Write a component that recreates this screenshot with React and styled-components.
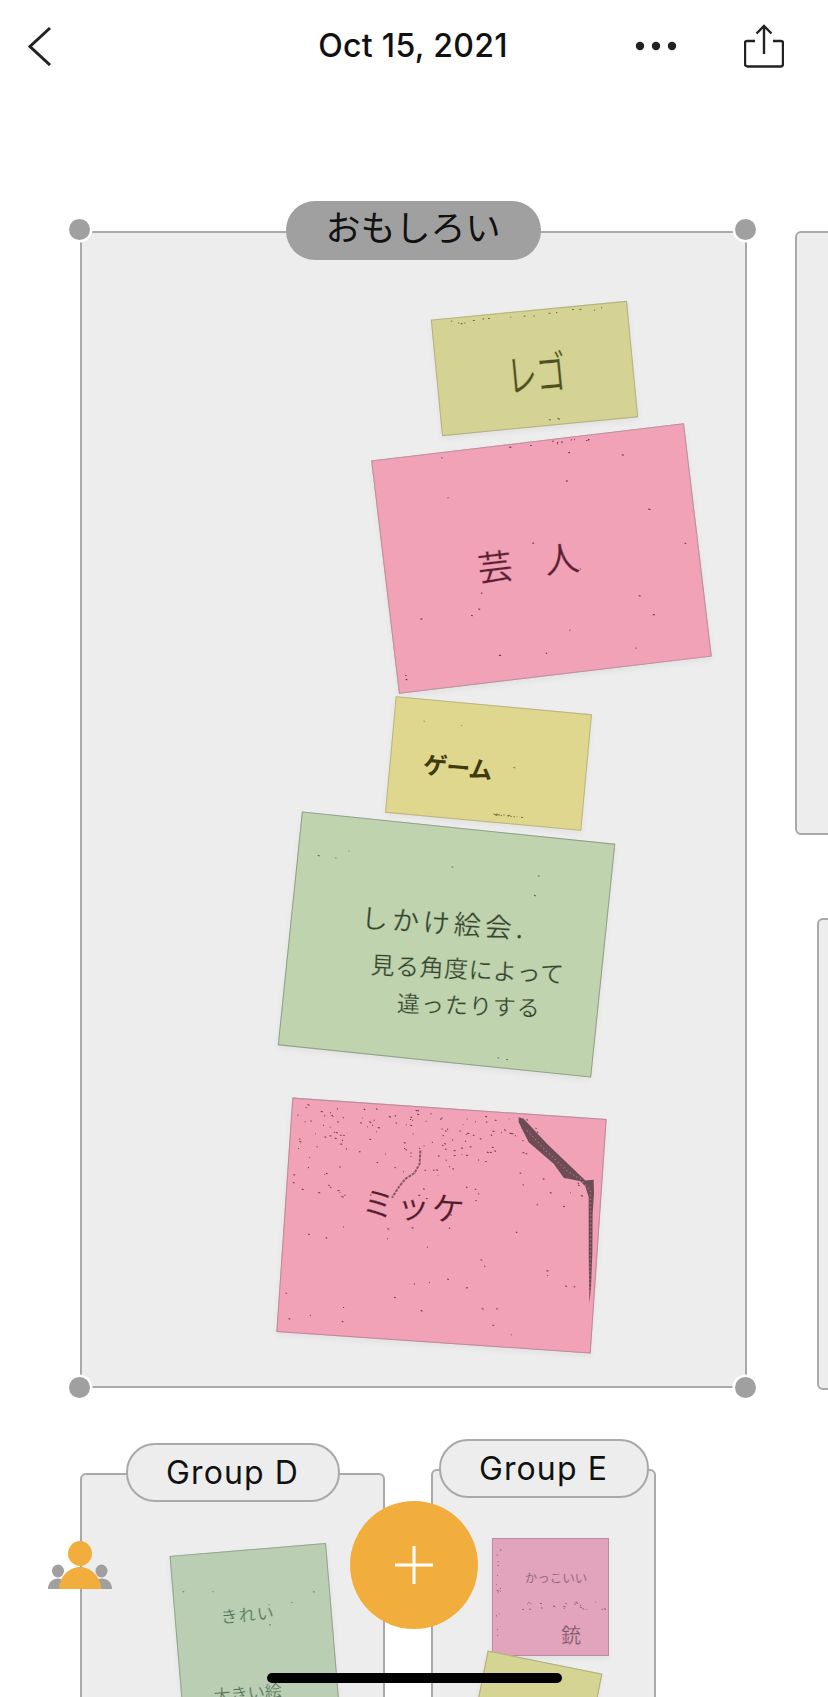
import React from "react";
import styled, { createGlobalStyle } from "styled-components";

const HEADER = 92;
const UI_FONT = '"Inter", "Liberation Sans", sans-serif';
const CJK_FONT = '"Noto Sans CJK JP", "Noto Sans", sans-serif';

const Global = createGlobalStyle`
  html, body { margin: 0; padding: 0; background: #fff; }
  body { font-family: ${UI_FONT}; }
`;

const Page = styled.div`
  position: relative;
  width: 828px;
  height: 1697px;
  overflow: hidden;
  background: #fff;
  display: flex;
  flex-direction: column;
`;

const Header = styled.header`
  position: relative;
  z-index: 3;
  height: ${HEADER}px;
  flex: none;
  display: grid;
  grid-template-columns: 1fr auto 1fr;
  align-items: center;
  padding: 0 44px 0 26px;
  box-sizing: border-box;
`;

const Title = styled.h1`
  margin: 0;
  font: 500 32px/1 ${UI_FONT};
  letter-spacing: 0.3px;
  color: #111;
  transform: translate(8px, 0);
`;

const Actions = styled.div`
  display: flex;
  justify-content: flex-end;
  align-items: center;
  gap: 67px;
`;

const IconButton = styled.button`
  border: 0;
  background: none;
  padding: 0;
  display: flex;
  justify-content: ${(p) => p.$justify || "center"};
  align-items: center;
`;

const Canvas = styled.main`
  position: relative;
  flex: 1;
`;

const Group = styled.section`
  position: absolute;
  left: ${(p) => p.$x}px;
  top: ${(p) => p.$y - HEADER}px;
  width: ${(p) => p.$w}px;
  height: ${(p) => p.$h}px;
  box-sizing: border-box;
  background: #ededed;
  border: 2px solid #a9a9a9;
  border-radius: ${(p) => (p.$selected ? 0 : 6)}px;
`;

const Handle = styled.span`
  position: absolute;
  width: 21px;
  height: 21px;
  border-radius: 50%;
  background: #a0a0a0;
  box-shadow: 0 0 0 2.5px #fff;
  ${(p) => (p.$right ? "right: -11px;" : "left: -13px;")}
  ${(p) => (p.$bottom ? "bottom: -12px;" : "top: -14px;")}
`;

const GroupLabel = styled.div`
  position: absolute;
  left: ${(p) => p.$left}px;
  top: ${(p) => p.$top}px;
  width: ${(p) => p.$w}px;
  height: ${(p) => p.$h}px;
  box-sizing: border-box;
  display: flex;
  align-items: center;
  justify-content: center;
  border-radius: 29px;
  font: 400 32px/1 ${UI_FONT};
  letter-spacing: 1.1px;
  color: #111;
  background: ${(p) => (p.$selected ? "#a0a0a0" : "#ededed")};
  border: ${(p) => (p.$selected ? "0" : "2px solid #a9a9a9")};
  ${(p) => (p.$selected ? `font-family: ${CJK_FONT}; font-size: 35px; letter-spacing: 0; padding-bottom: 11px;` : "")}
`;

const Note = styled.article`
  position: absolute;
  left: ${(p) => p.$cx - p.$w / 2 - p.$ox}px;
  top: ${(p) => p.$cy - p.$h / 2 - p.$oy}px;
  width: ${(p) => p.$w}px;
  height: ${(p) => p.$h}px;
  box-sizing: border-box;
  transform: rotate(${(p) => p.$a}deg);
  background: ${(p) => p.$bg};
  border: 1px solid ${(p) => p.$edge};
  box-shadow: 0 3px 6px rgba(0, 0, 0, 0.05);
`;

const Specks = styled.svg`
  position: absolute;
  left: -1px;
  top: -1px;
`;

const Scribble = styled.span`
  position: absolute;
  left: ${(p) => p.$x}px;
  top: ${(p) => p.$y}px;
  transform: translate(-50%, -50%) rotate(${(p) => p.$tilt || 0}deg) scaleY(${(p) => p.$sy || 1});
  white-space: nowrap;
  font: ${(p) => p.$weight || 400} ${(p) => p.$size}px/1 ${CJK_FONT};
  letter-spacing: ${(p) => p.$gap || 0}px;
  color: ${(p) => p.$color};
  -webkit-text-stroke: ${(p) => (p.$weight ? 0 : 0.25)}px ${(p) => p.$bg};
`;

const Fab = styled.button`
  position: absolute;
  z-index: 4;
  left: 350px;
  top: 1501px;
  width: 128px;
  height: 128px;
  border: 0;
  padding: 0;
  border-radius: 50%;
  background: #f2ae3c;
  display: flex;
  align-items: center;
  justify-content: center;
`;

const People = styled.svg`
  position: absolute;
  z-index: 4;
  left: 48px;
  top: 1541px;
`;

const HomeBar = styled.div`
  position: absolute;
  z-index: 5;
  left: 267px;
  top: 1673px;
  width: 295px;
  height: 10px;
  border-radius: 5px;
  background: #000;
`;

const rng = (seed) => {
  let s = seed;
  return () => {
    s = (s * 16807) % 2147483647;
    return (s - 1) / 2147483646;
  };
};

const scatter = (seed, n, x0, y0, x1, y1) => {
  const r = rng(seed);
  let d = "";
  for (let i = 0; i < n; i++) {
    const x = x0 + r() * (x1 - x0);
    const y = y0 + r() * (y1 - y0);
    const l = 0.6 + r() * 1.6;
    d += `M${x.toFixed(1)} ${y.toFixed(1)}l${l.toFixed(1)} ${(r() * 0.8).toFixed(1)}`;
  }
  return d;
};

const toLocal = (n, px, py) => {
  const t = (n.a * Math.PI) / 180;
  const dx = px - n.cx;
  const dy = py - n.cy;
  return [
    n.w / 2 + Math.cos(t) * dx + Math.sin(t) * dy,
    n.h / 2 - Math.sin(t) * dx + Math.cos(t) * dy,
  ];
};

const fromZoom4 = ([x, y]) => [260 + x / 3, 1080 + y / 3];

const SMEAR = [
  [775, 110], [790, 115], [860, 190], [975, 300], [1000, 298], [1001, 340], [997, 400],
  [996, 520], [992, 620], [987, 668], [985, 520], [985, 350], [975, 318], [960, 302],
  [910, 292], [880, 250], [805, 185], [775, 125],
].map(fromZoom4);

const SMEAR_HOLES = [
  [800, 150], [860, 215], [925, 275], [960, 296], [990, 330], [991, 420], [990, 540], [989, 640],
].map(fromZoom4);

const CRACK = [
  [480, 210], [478, 250], [462, 278], [435, 295], [415, 320], [395, 352],
].map(fromZoom4);

const pts = (n, list) => list.map(([x, y]) => toLocal(n, x, y).map((v) => v.toFixed(1)).join(",")).join(" ");

const NOTES = {
  lego: {
    cx: 533.8, cy: 368.6, w: 196.6, h: 117, a: -5.5, bg: "#d4d394", edge: "#b3b384", ink: "#6a6a3a",
    dust: [[31, 16, 20, 3, 180, 7], [13, 3, 108, 110, 118, 111]],
    texts: [{ x: 534, y: 370, size: 30, text: "レゴ", color: "#4f4f22", gap: -1, sy: 1.5 }],
  },
  geinin: {
    cx: 541.5, cy: 558.5, w: 314.6, h: 235.4, a: -6.8, bg: "#f1a2b7", edge: "#b8919c", ink: "#5e2a3b",
    dust: [[7, 12, 70, 2, 230, 6], [91, 20, 8, 12, 304, 228]],
    texts: [{ x: 543, y: 558, size: 35, text: "芸人", color: "#5a2233", gap: 32 }],
  },
  game: {
    cx: 488.7, cy: 763.2, w: 196.5, h: 117, a: 5.26, bg: "#e0d78f", edge: "#bcb582", ink: "#7b7544",
    dust: [[17, 16, 108, 108, 145, 109], [23, 3, 30, 20, 180, 100]],
    texts: [{ x: 457, y: 765, size: 24, text: "ゲーム", color: "#3f3a10", weight: 700, gap: -1 }],
  },
  trick: {
    cx: 446.6, cy: 944.6, w: 314.7, h: 235.3, a: 5.9, bg: "#bfd4ae", edge: "#90a08c", ink: "#5e6d55",
    dust: [[41, 6, 20, 30, 280, 60], [59, 2, 220, 222, 240, 226]],
    texts: [
      { x: 444, y: 921, size: 27, text: "しかけ絵会.", color: "#37452f", gap: 4, tilt: -2 },
      { x: 467, y: 967, size: 24, text: "見る角度によって", color: "#37452f", gap: 0.5, tilt: -3 },
      { x: 468, y: 1003, size: 23, text: "違ったりする", color: "#37452f", gap: 1, tilt: -4 },
    ],
  },
  mikke: {
    cx: 440.9, cy: 1225, w: 314.5, h: 235, a: 3.9, bg: "#f1a2b7", edge: "#b98d9b", ink: "#6b3a48",
    dust: [[101, 120, 6, 3, 250, 52], [103, 42, 6, 55, 300, 95], [211, 34, 6, 95, 300, 228]],
    smear: true,
    texts: [{ x: 413, y: 1204, size: 33, text: "ミッケ", color: "#4f1c2b", gap: 2 }],
  },
  kirei: {
    cx: 257, cy: 1666.5, w: 157, h: 235, a: -4.75, bg: "#b9ceb3", edge: "#94a58f", ink: "#67806a",
    dust: [[71, 6, 10, 4, 140, 100]],
    texts: [
      { x: 246, y: 1613, size: 17, text: "きれい", color: "#55705a", gap: 1 },
      { x: 246, y: 1691, size: 17, text: "大きい絵", color: "#55705a" },
    ],
  },
  kakkoii: {
    cx: 550.2, cy: 1596.9, w: 117.3, h: 117.7, a: 0, bg: "#e2a4bd", edge: "#b98ca0", ink: "#86606f",
    dust: [[83, 22, 30, 64, 112, 72], [89, 14, 4, 4, 8, 108]],
    texts: [
      { x: 555, y: 1577, size: 12.5, text: "かっこいい", color: "#7a5666" },
      { x: 570, y: 1634, size: 20, text: "銃", color: "#7a5666" },
    ],
  },
  last: {
    cx: 533, cy: 1719, w: 117, h: 117, a: 11.4, bg: "#d5d493", edge: "#afae7f", ink: "#6b6b3a",
    dust: [],
    texts: [],
  },
};

const StickyNote = ({ n, ox, oy }) => (
  <Note $cx={n.cx} $cy={n.cy} $w={n.w} $h={n.h} $a={n.a} $bg={n.bg} $edge={n.edge} $ox={ox} $oy={oy}>
    <Specks width={n.w} height={n.h} viewBox={`0 0 ${n.w} ${n.h}`}>
      <path
        d={n.dust.map(([s, c, a, b, d, e]) => scatter(s, c, a, b, d, e)).join("")}
        stroke={n.ink}
        strokeWidth="1"
        fill="none"
      />
      {n.smear && (
        <>
          <polygon points={pts(n, SMEAR)} fill="#6d4c55" />
          <polyline points={pts(n, SMEAR_HOLES)} fill="none" stroke={n.bg} strokeOpacity="0.55" strokeWidth="1.4" strokeDasharray="1 3" />
          <polyline points={pts(n, CRACK)} fill="none" stroke="#8a5a68" strokeWidth="2" strokeDasharray="3 1" />
        </>
      )}
    </Specks>
    {n.texts.map((t) => {
      const [x, y] = toLocal(n, t.x, t.y);
      return (
        <Scribble key={t.text} $x={x} $y={y} $size={t.size} $color={t.color} $gap={t.gap} $tilt={t.tilt} $weight={t.weight} $sy={t.sy} $bg={n.bg}>
          {t.text}
        </Scribble>
      );
    })}
  </Note>
);

const GROUPS = {
  main: { x: 80, y: 230.5, w: 667, h: 1157 },
  side1: { x: 794.5, y: 231, w: 110, h: 604 },
  side2: { x: 817, y: 918, w: 110, h: 472 },
  d: { x: 80, y: 1472.5, w: 305, h: 420 },
  e: { x: 431, y: 1469, w: 225, h: 420 },
};

const Board = ({ g, selected, label, notes, children }) => (
  <Group $x={g.x} $y={g.y} $w={g.w} $h={g.h} $selected={selected}>
    {label}
    {(notes || []).map((key) => (
      <StickyNote key={key} n={NOTES[key]} ox={g.x + 2} oy={g.y + 2} />
    ))}
    {children}
  </Group>
);

export default function App() {
  return (
    <Page>
      <Global />
      <Header>
        <IconButton $justify="flex-start" aria-label="Back">
          <svg width="26" height="40" viewBox="0 0 26 40">
            <path d="M24 2 L4 20.5 L24 39" fill="none" stroke="#222" strokeWidth="3" />
          </svg>
        </IconButton>
        <Title>Oct 15, 2021</Title>
        <Actions>
          <IconButton aria-label="More">
            <svg width="42" height="10" viewBox="0 0 42 10">
              <circle cx="5" cy="5" r="4.2" fill="#222" />
              <circle cx="21" cy="5" r="4.2" fill="#222" />
              <circle cx="37" cy="5" r="4.2" fill="#222" />
            </svg>
          </IconButton>
          <IconButton aria-label="Share">
            <svg width="40" height="44" viewBox="0 0 40 44">
              <path
                d="M11 17 H3 a2 2 0 0 0 -2 2 V40 a2.5 2.5 0 0 0 2.5 2.5 H36.5 a2.5 2.5 0 0 0 2.5 -2.5 V19 a2 2 0 0 0 -2 -2 H29"
                fill="none"
                stroke="#222"
                strokeWidth="2.4"
              />
              <path d="M20 30 V2 M12.5 9.5 L20 2 L27.5 9.5" fill="none" stroke="#222" strokeWidth="2.4" />
            </svg>
          </IconButton>
        </Actions>
      </Header>

      <Canvas>
        <Board
          g={GROUPS.main}
          selected
          notes={["lego", "geinin", "game", "trick", "mikke"]}
          label={
            <GroupLabel $selected $left={203.5} $top={-31.5} $w={255} $h={59}>
              おもしろい
            </GroupLabel>
          }
        >
          <Handle />
          <Handle $right />
          <Handle $bottom />
          <Handle $right $bottom />
        </Board>
        <Board g={GROUPS.side1} />
        <Board g={GROUPS.side2} />
        <Board
          g={GROUPS.d}
          notes={["kirei"]}
          label={
            <GroupLabel $left={43.5} $top={-31.5} $w={214} $h={59}>
              Group D
            </GroupLabel>
          }
        />
        <Board
          g={GROUPS.e}
          notes={["kakkoii", "last"]}
          label={
            <GroupLabel $left={5.5} $top={-32} $w={210} $h={59}>
              Group E
            </GroupLabel>
          }
        />
      </Canvas>

      <People width="64" height="48" viewBox="0 0 64 48">
        <ellipse cx="10" cy="30" rx="6" ry="6.5" fill="#a0a0a0" />
        <ellipse cx="53.5" cy="30" rx="6" ry="6.5" fill="#a0a0a0" />
        <path d="M0 48 C0 41 5 37.5 10 37.5 C15 37.5 20 41 20 48 Z" fill="#a0a0a0" />
        <path d="M44 48 C44 41 49 37.5 54 37.5 C59 37.5 64 41 64 48 Z" fill="#a0a0a0" />
        <ellipse cx="32" cy="12.5" rx="12" ry="12.5" fill="#f2ae3c" />
        <path d="M11 48 C11 36 21 26 32 26 C43 26 53 36 53 48 Z" fill="#f2ae3c" />
      </People>

      <Fab aria-label="Add">
        <svg width="40" height="40" viewBox="0 0 40 40">
          <path d="M20 1 V39 M1 20 H39" stroke="#fff" strokeWidth="3" fill="none" />
        </svg>
      </Fab>

      <HomeBar />
    </Page>
  );
}
